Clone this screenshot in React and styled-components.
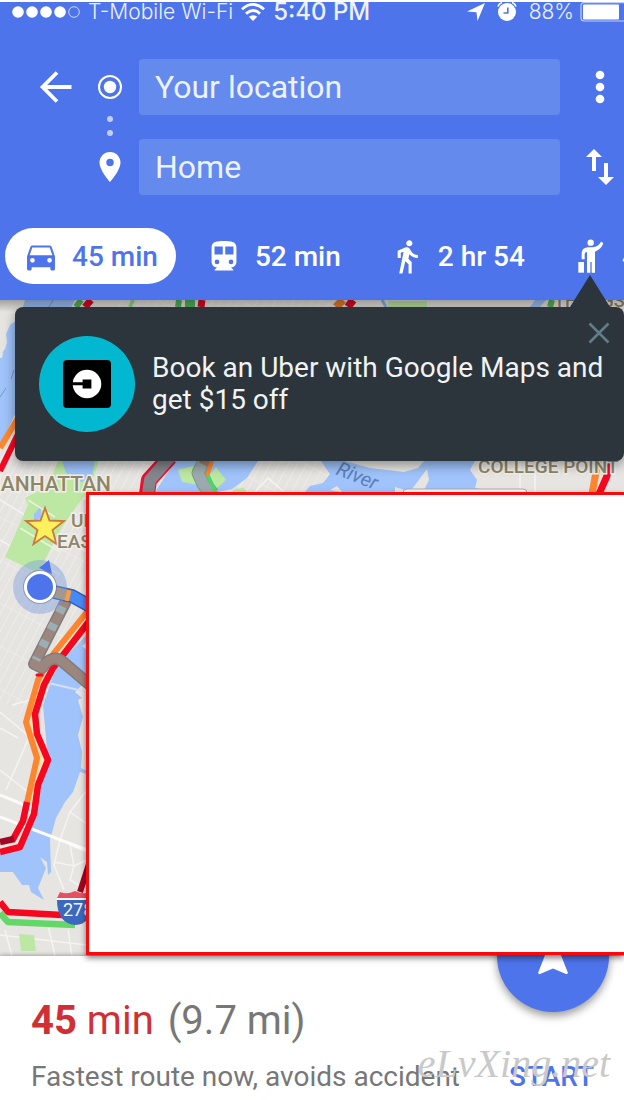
import React from "react";
import styled, { createGlobalStyle } from "styled-components";

const blue = "#4e74ec";
const slate = "#2b353b";

const GlobalStyle = createGlobalStyle`
  *, *::before, *::after { box-sizing: border-box; }
  body {
    margin: 0;
    background: #fff;
    font-family: Roboto, "Liberation Sans", sans-serif;
    overflow-x: hidden;
  }
  button, input { font: inherit; color: inherit; border: 0; margin: 0; padding: 0; background: none; }
  svg { display: block; flex: none; overflow: visible; }
`;

const Page = styled.div`
  min-height: 100vh;
  display: flex;
  flex-direction: column;
  overflow: hidden;
  border-top: 2px solid #fff;
`;

const Header = styled.header`
  background: ${blue};
  color: #fff;
  padding-bottom: 16px;
`;

const StatusBar = styled.div`
  display: flex;
  align-items: center;
  justify-content: space-between;
  height: 20px;
  padding-left: 11px;
  font-family: Inter, Roboto, sans-serif;
  line-height: 20px;
  white-space: nowrap;
`;

const StatusGroup = styled.div`
  display: flex;
  align-items: center;
  gap: ${(p) => p.$gap}px;
`;

const StatusText = styled.span`
  font-size: ${(p) => (p.$strong ? 24 : 21)}px;
  font-weight: ${(p) => (p.$strong ? 500 : 300)};
  opacity: 0.9;
`;

const RouteForm = styled.form`
  display: grid;
  grid-template-columns: 48px 59px minmax(0, 1fr) 64px;
  grid-template-rows: 56px 24px 56px;
  align-items: center;
  justify-items: center;
  padding: 37px 0 33px 32px;
`;

const PlaceField = styled.input`
  grid-column: 3;
  width: 100%;
  height: 56px;
  padding: 0 16px;
  border-radius: 4px;
  background: #648aee;
  font-size: 32px;
  color: #edf2ff;
  outline: none;
`;

const IconButton = styled.button`
  display: grid;
  place-items: center;
  width: 48px;
  height: 48px;
  cursor: pointer;
`;

const BackButton = styled(IconButton)`
  grid-column: 1;
`;

const ActionButton = styled(IconButton)`
  grid-column: 4;
  justify-self: end;
`;

const RouteMark = styled.span`
  grid-column: 2;
`;

const Modes = styled.nav`
  display: flex;
  gap: 12px;
  padding-left: 5px;
  overflow: hidden;
`;

const ModeButton = styled.button`
  display: flex;
  flex: none;
  align-items: center;
  gap: 15px;
  height: 56px;
  padding: 0 18px 0 20px;
  border-radius: 28px;
  background: ${(p) => (p.$active ? "#fff" : "transparent")};
  color: ${(p) => (p.$active ? blue : "#fff")};
  font-size: 28px;
  font-weight: 500;
  white-space: nowrap;
  cursor: pointer;
`;

const MapArea = styled.main`
  position: relative;
  flex: 1;
  min-height: 480px;
  background: #e7e5e1;
`;

const MapCanvas = styled.svg`
  position: absolute;
  inset: 0;
  width: 100%;
  height: 100%;
  overflow: hidden;
`;

const Callout = styled.aside`
  position: absolute;
  z-index: 3;
  top: 7px;
  left: 15px;
  right: 0;
  display: flex;
  align-items: center;
  gap: 17px;
  min-height: 154px;
  padding: 24px 16px 24px 24px;
  border-radius: 8px;
  background: ${slate};
  box-shadow: 0 4px 12px rgba(0, 0, 0, 0.4);
  color: #f1f3f3;
  font-size: 28px;
  line-height: 32px;

  &::before {
    content: "";
    position: absolute;
    right: 14px;
    bottom: 100%;
    border: solid transparent;
    border-width: 0 20px 32px;
    border-bottom-color: ${slate};
  }
`;

const CalloutText = styled.p`
  margin: 0;
`;

const CloseButton = styled.button`
  position: absolute;
  top: 14px;
  right: 13px;
  padding: 2px;
  cursor: pointer;
`;

const BlankPanel = styled.section`
  position: absolute;
  z-index: 4;
  top: 192px;
  left: 86px;
  right: 0;
  bottom: 1px;
  border: 3px solid #f9090b;
  border-right: 0;
  background: #fff;
  box-shadow: 0 3px 6px rgba(0, 0, 0, 0.5);
`;

const Sheet = styled.footer`
  position: relative;
  z-index: 1;
  padding: 41px 30px 7px 31px;
  background: #fff;
  box-shadow: 0 -1px 4px rgba(0, 0, 0, 0.3);
  color: #777;
`;

const Summary = styled.h1`
  margin: 0 0 16px;
  font-size: 40px;
  line-height: 48px;
  font-weight: 400;
`;

const Duration = styled.span`
  margin-right: 4px;
  color: #d03034;
`;

const SheetRow = styled.div`
  display: flex;
  justify-content: space-between;
  align-items: center;
  font-size: 28px;
  line-height: 32px;
  white-space: nowrap;
`;

const StartButton = styled.button`
  color: ${blue};
  font-weight: 500;
  cursor: pointer;
`;

const NavigateButton = styled.button`
  position: absolute;
  top: -56px;
  right: 15px;
  display: grid;
  place-items: center;
  width: 112px;
  height: 112px;
  border-radius: 50%;
  background: ${blue};
  box-shadow: 0 4px 8px rgba(0, 0, 0, 0.4);
`;

const Watermark = styled.span`
  position: absolute;
  right: 14px;
  bottom: 12px;
  color: #c9c9c9;
  font-family: "Liberation Serif", serif;
  font-size: 40px;
  font-style: italic;
  line-height: 48px;
  pointer-events: none;
`;

const SignalIcon = () => (
  <svg width="69" height="14" viewBox="0 0 69 14" fill="#fff">
    {[7, 21, 35, 49].map((x) => <circle key={x} cx={x} cy="7" r="5.8" />)}
    <circle cx="63" cy="7" r="5.3" fill="none" stroke="#fff" strokeOpacity=".7" />
  </svg>
);

const WifiIcon = () => (
  <svg width="24" height="18" viewBox="0 0 24 18" fill="none" stroke="#fff" strokeWidth="2.8">
    <path d="M1 6.2Q12-3.4 23 6.2M5 10.6Q12 4.4 19 10.6" />
    <path d="M12 18L7.8 13.8Q12 10.6 16.2 13.8Z" fill="#fff" stroke="none" />
  </svg>
);

const LocationArrowIcon = () => (
  <svg width="18" height="18" viewBox="0 0 18 18" fill="#fff">
    <path d="M18 0L10.5 18L9.5 9.2L0 8.4Z" />
  </svg>
);

const AlarmIcon = () => (
  <svg width="20" height="18" viewBox="0 0 20 18" fill="none" stroke="#fff">
    <circle cx="10" cy="9" r="9" fill="#fff" stroke="none" />
    <path d="M1 3.5Q2 .5 5-.4M19 3.5Q18 .5 15-.4" strokeWidth="1.6" />
    <path d="M10.8 4.5V10H6.5" stroke={blue} strokeWidth="1.6" />
  </svg>
);

const BatteryIcon = () => (
  <svg width="44" height="20" viewBox="0 0 44 20">
    <path d="M44 .7H4Q1 .7 1 3.7V16Q1 19 4 19H44" fill="none" stroke="#fff" strokeOpacity=".65" strokeWidth="1.2" />
    <rect x="3" y="2.4" width="36" height="15" rx="1" fill="#fff" />
  </svg>
);

const BackIcon = () => (
  <svg width="32" height="32" viewBox="0 0 32 32" fill="none" stroke="#fff" strokeWidth="3.8">
    <path d="M31.5 16H3M17 1.5L2.6 16L17 30.5" />
  </svg>
);

const OriginIcon = () => (
  <svg width="24" height="24" viewBox="0 0 24 24">
    <circle cx="12" cy="12" r="11" fill="none" stroke="#fff" strokeWidth="2" />
    <circle cx="12" cy="12" r="6.2" fill="#fff" />
  </svg>
);

const DotsIcon = () => (
  <svg width="8" height="22" viewBox="0 0 8 22" fill="#fff" opacity=".65">
    <circle cx="4" cy="3" r="3" /><circle cx="4" cy="17" r="3" />
  </svg>
);

const PinIcon = () => (
  <svg width="22" height="30" viewBox="5 2 14 20" fill="#fff">
    <path d="M12 2C8.13 2 5 5.13 5 9c0 5.25 7 13 7 13s7-7.75 7-13c0-3.87-3.13-7-7-7zm0 9.5a2.5 2.5 0 1 1 0-5 2.5 2.5 0 0 1 0 5z" />
  </svg>
);

const MoreIcon = () => (
  <svg width="10" height="34" viewBox="0 0 10 34" fill="#fff">
    <circle cx="5" cy="5" r="4.3" /><circle cx="5" cy="17" r="4.3" /><circle cx="5" cy="29" r="4.3" />
  </svg>
);

const SwapIcon = () => (
  <svg width="28" height="36" viewBox="0 0 28 36" fill="#fff">
    <path d="M8 0L16 8H10V22H6V8H0ZM20 36L12 28H18V14H22V28H28Z" />
  </svg>
);

const ModeGlyph = ({ children }) => (
  <svg width="32" height="32" viewBox="1.7 1.4 20.6 20.6" fill="currentColor">{children}</svg>
);

const CarIcon = () => (
  <ModeGlyph>
    <path fillRule="evenodd" d="M18.92 6.01C18.72 5.42 18.16 5 17.5 5h-11c-.66 0-1.21.42-1.42 1.01L3 12v8c0 .55.45 1 1 1h1c.55 0 1-.45 1-1v-1h12v1c0 .55.45 1 1 1h1c.55 0 1-.45 1-1v-8l-2.08-5.99zM6.5 16a1.5 1.5 0 1 1 0-3 1.5 1.5 0 0 1 0 3zm11 0a1.5 1.5 0 1 1 0-3 1.5 1.5 0 0 1 0 3zM4.7 11.2L6.4 6.3h11.2l1.7 4.9H4.7z" />
  </ModeGlyph>
);

const TrainIcon = () => (
  <ModeGlyph>
    <path fillRule="evenodd" d="M12 2c-4.42 0-8 .5-8 4v9.5C4 17.43 5.57 19 7.5 19L6 20.5v.5h12v-.5L16.5 19c1.93 0 3.5-1.57 3.5-3.5V6c0-3.5-3.58-4-8-4zM7.5 17a1.5 1.5 0 1 1 0-3 1.5 1.5 0 0 1 0 3zm3.7-6.2H5.9V5.6h5.3v5.2zm5.3 6.2a1.5 1.5 0 1 1 0-3 1.5 1.5 0 0 1 0 3zm1.6-6.2h-5.3V5.6h5.3v5.2z" />
  </ModeGlyph>
);

const WalkIcon = () => (
  <ModeGlyph>
    <path d="M13.5 5.5c1.1 0 2-.9 2-2s-.9-2-2-2-2 .9-2 2 .9 2 2 2zM9.8 8.9L7 23h2.1l1.8-8 2.1 2v6h2v-7.5l-2.1-2 .6-3C14.8 12 16.8 13 19 13v-2c-1.9 0-3.5-1-4.3-2.4l-1-1.6c-.4-.6-1-1-1.7-1-.3 0-.5.1-.8.1L6 8.3V13h2V9.6l1.8-.7" />
  </ModeGlyph>
);

const HailIcon = () => (
  <svg width="32" height="32" viewBox="7 0 96 96" fill="currentColor">
    <circle cx="54" cy="8" r="9.5" />
    <path d="M27 58V40Q27 24 45 22H60Q77 20 85 5L92 9Q87 27 67 35V98H57V66H53V98H43V36Q36 36 36 43V58Z" />
    <path d="M17 66H34V98H17Z" />
  </svg>
);

const UberIcon = () => (
  <svg width="96" height="96" viewBox="0 0 96 96">
    <circle cx="48" cy="48" r="48" fill="#02b8d1" />
    <rect x="24" y="24" width="48" height="48" rx="4" />
    <circle cx="48" cy="48" r="14.3" fill="#fff" />
    <path d="M33 46.3H43.6V43.6H52.4V52.4H43.6V49.2H33Z" />
  </svg>
);

const CloseIcon = () => (
  <svg width="20" height="20" viewBox="0 0 20 20" stroke="#607d89" strokeWidth="2.6">
    <path d="M.5.5L19.5 19.5M19.5.5L.5 19.5" />
  </svg>
);

const NavigateIcon = () => (
  <svg width="38" height="38" viewBox="0 0 38 38" fill="#fff">
    <path d="M19-2L34 36L32.6 37.2L19 31.4L5.4 37.2L4 36Z" />
  </svg>
);

function MapDrawing() {
  return (
    <MapCanvas viewBox="0 300 624 656" preserveAspectRatio="xMinYMin slice" aria-label="Route map">
      <defs>
        <pattern id="blocks" width="8" height="38" patternUnits="userSpaceOnUse" patternTransform="rotate(28)">
          <rect width="8" height="38" fill="#e6e4e0" />
          <path d="M0 0V38M0 0H8" stroke="#efeeec" strokeWidth="1.6" />
        </pattern>
        <linearGradient id="headerShade" x1="0" y1="0" x2="0" y2="1">
          <stop offset="0" stopColor="#000" stopOpacity=".3" />
          <stop offset="1" stopColor="#000" stopOpacity="0" />
        </linearGradient>
      </defs>
      <rect y="300" width="624" height="656" fill="#e7e5e1" />
      <path d="M0 448L20 400L120 300H330V492H87V612L40 680L28 720L0 700Z" fill="url(#blocks)" />

      <g fill="none" stroke="#f5f4f2" strokeWidth="1.5">
        <path d="M0 712L36 742M12 705L30 700M30 735L6 790M0 770L28 792M0 728L18 738M0 500L87 552M0 540L60 575M60 485L87 500" />
        <path d="M87 790L70 812L60 840L54 865L64 890M70 812L87 824M54 862L74 866L87 860M74 866L70 880L87 890M74 866L70 845L87 852" />
        <path d="M0 935L87 945M5 930L12 956M48 925L55 956M68 930L72 956M35 480L50 500" />
        <path d="M255 492L268 478L284 492M520 461V492M535 470V492" />
      </g>

      <g fill="#9fc3fa">
        <path d="M25 300H75L16 412L0 446V356L5 349L7 342L6 334L10 325L20 318Z" />
        <path d="M87 634L56 668L43 705L48 760L34 816L20 848L0 852V872H13L22 885H29L31 892L44 900L38 888L46 868L40 857L47 862L48 875L51 872L50 840L56 818L65 802L73 792L80 772L87 774V771L81 768L82 752L78 735L83 717L78 700L82 698L75 692L87 680V650L82 646L87 642Z" />
        <path d="M175 461H258L247 478L232 489L218 492H155Z" />
        <path d="M321 461H475L470 470L477 480L475 488L495 492H305L310 486L323 483L330 474Z" />
        <path d="M535 300H546L540 307H530Z" />
      </g>
      <path d="M0 352L3 353L2 358H0Z" fill="#e7e5e1" />
      <path d="M345 461H424L418 468L404 472L370 468ZM412 489L427 469L429 480L424 490ZM330 490L337 486L342 492ZM395 487L405 490V492H395Z" fill="#e7e5e1" />
      <path d="M53 300L49 307M14 370L11 379M6 388L0 397" stroke="#7899ca" strokeWidth="1" />

      <g fill="#bde8a3">
        <path d="M58 461H99L88 492H87L62 527L38 573L5 557L28 505L25 498L48 486Z" />
        <path d="M178 470L193 466L199 485L182 482ZM208 477L216 467L226 480L216 489ZM235 489L243 488L247 492H232Z" />
        <path d="M19 934L34 935L36 951H21Z" />
        <path d="M388 301H427V307H388Z" />
      </g>
      <path d="M34 514L41 506L41 518L34 521ZM62 461H95L92 476L82 482L66 473Z" fill="#9fc3fa" />
      <path d="M20 528L60 552M28 500L55 517" stroke="#e6f5da" strokeWidth="1.5" />

      <g fill="none" stroke="#fbfbfa" strokeWidth="3">
        <path d="M0 795L34 809M0 817L87 850" />
        <path d="M40 681L87 692" stroke="#d3e1f3" strokeWidth="2" />
      </g>

      <g fill="none" strokeWidth="6">
        <path d="M18 418L0 448" stroke="#ff882f" />
        <path d="M20 430L0 471" stroke="#f30722" />
        <path d="M81 300L76 307" stroke="#52b557" />
        <path d="M91 300L85 307M202 300L201 307" stroke="#dc0922" strokeWidth="7" />
        <path d="M133 300L130 307" stroke="#9ad68d" strokeWidth="4" />
        <path d="M179 300L178 307M552 300L550 307" stroke="#52b557" />
        <path d="M190 300V307" stroke="#52b557" strokeWidth="10" />
        <path d="M343 300L336 307" stroke="#e97b2b" strokeWidth="8" />
        <path d="M353 300L348 307" stroke="#dc0922" strokeWidth="8" />
        <path d="M382 300L386 307" stroke="#8eb1e5" strokeWidth="3" />
      </g>

      <g fill="none" strokeLinejoin="round">
        <path d="M90 616L58 660L42 688L32 722L42 758L32 803" stroke="#fae2b8" strokeWidth="7" />
        <path d="M90 608L54 653L38 680L26 722L37 758L27 803" stroke="#fd8530" strokeWidth="6" />
        <path d="M90 620L53 668L44 685L35 714L37 734L48 760L38 785L34 814L20 847L0 852" stroke="#f50720" strokeWidth="6.5" />
        <path d="M27 802L23 821L12 841" stroke="#f50720" strokeWidth="6.5" />
        <path d="M14 839L0 842" stroke="#a00722" strokeWidth="6.5" />
        <path d="M89 864L80 892" stroke="#a00722" strokeWidth="6" />
        <path d="M0 902L8 912L62 915" stroke="#f50720" strokeWidth="6.5" />
        <path d="M0 913L8 922L75 925" stroke="#64d768" strokeWidth="6.5" />
      </g>

      <g fill="none" strokeLinejoin="round">
        <path d="M170 457L149 480L147 494" stroke="#e91135" strokeWidth="16" />
        <path d="M170 457L150 480L148 494" stroke="#84868c" strokeWidth="12" />
        <path d="M207 458L199 473L204 484L212 494" stroke="#72a474" strokeWidth="15" />
        <path d="M205 458L198 473L203 484L210 494" stroke="#9da9b0" strokeWidth="11" />
        <path d="M204 465L208 457" stroke="#a77e69" strokeWidth="11" />
        <path d="M212 461L207 476" stroke="#fd8530" strokeWidth="4" />
        <path d="M208 476L216 493" stroke="#4fd26b" strokeWidth="4" />
        <path d="M598 461L592 494" stroke="#fd8530" strokeWidth="7" />
        <path d="M612 461Q607 478 599 494" stroke="#f50720" strokeWidth="7" />
      </g>

      <g fill="none" strokeLinejoin="round" strokeLinecap="round">
        <path d="M65 603L34 664L42 668Q52 653 63 662L90 685" stroke="#807d7b" strokeWidth="12" />
        <path d="M65 603L34 664L42 668Q52 653 63 662L90 685" stroke="#9c877f" strokeWidth="9" />
        <path d="M65 601L36 660" stroke="#9caeb4" strokeWidth="9" strokeLinecap="butt" strokeDasharray="7 12" strokeDashoffset="-6" />
        <path d="M37 675H42" stroke="#f50720" strokeWidth="3" />
      </g>
      <g fill="none" strokeLinejoin="round">
        <path d="M54 592L72 596L90 606" stroke="#355db2" strokeWidth="14" />
        <path d="M54 592L72 596L90 606" stroke="#488af5" strokeWidth="11" />
        <path d="M54 592L70 596" stroke="#c5975e" strokeWidth="11" />
        <path d="M66 595L70 596" stroke="#fb9f3e" strokeWidth="11" />
      </g>
      <circle cx="40" cy="587" r="27" fill="#7599de" fillOpacity=".42" />
      <path d="M39 568L49 560L52 574Z" fill="#4e74ec" />
      <circle cx="40" cy="587" r="17" fill="#596371" opacity=".45" />
      <circle cx="40" cy="587" r="14.5" fill="#4e74ec" stroke="#fff" strokeWidth="3" />
      <path d="M45 508L49.5 520.5L64 521L52.5 530L56.5 544L45 536L33.5 544L37.5 530L26 521L40.5 520.5Z" fill="#fcf15d" stroke="#cc783e" strokeWidth="1.8" />

      <g>
        <path d="M57 900H93Q92 925 75 925Q57 923 57 900Z" fill="#3c68bd" />
        <path d="M60 892Q67 895 75 891Q83 895 91 892V898H57Z" fill="#e84f62" />
        <path d="M57 899H90" stroke="#fff" strokeWidth="1.5" />
        <text x="63" y="916" fill="#f5f7fd" fontFamily="Roboto, sans-serif" fontSize="18">278</text>
      </g>

      <g fontFamily="Roboto, sans-serif" fontWeight="500" fill="#8f8568" stroke="#f1efeb" strokeWidth="3" paintOrder="stroke">
        <text x="111" y="491" fontSize="21" textAnchor="end">MANHATTAN</text>
        <text x="71" y="527" fontSize="19">UPPER</text>
        <text x="57" y="548" fontSize="19">EAST SIDE</text>
        <text x="478" y="473" fontSize="19">COLLEGE POINT</text>
        <text x="554" y="307" fontSize="18">THROGS</text>
      </g>
      <text transform="translate(335 474) rotate(22)" fontFamily="Roboto, sans-serif" fontSize="20" fontStyle="italic" fill="#5c7fbd">River</text>
      <rect x="403" y="489" width="124" height="30" rx="4" fill="#f8f8f7" stroke="#aaa" />
      <rect y="300" width="624" height="12" fill="url(#headerShade)" />
    </MapCanvas>
  );
}

const modes = [
  { label: "45 min", name: "Drive", Icon: CarIcon, active: true },
  { label: "52 min", name: "Transit", Icon: TrainIcon },
  { label: "2 hr 54", name: "Walk", Icon: WalkIcon },
  { label: "4 min", name: "Ride", Icon: HailIcon },
];

export default function App() {
  return (
    <>
      <GlobalStyle />
      <Page>
        <Header>
          <StatusBar>
            <StatusGroup $gap={8}>
              <SignalIcon />
              <StatusText>T-Mobile Wi-Fi</StatusText>
              <WifiIcon />
              <StatusText $strong>5:40 PM</StatusText>
            </StatusGroup>
            <StatusGroup $gap={12}>
              <LocationArrowIcon />
              <AlarmIcon />
              <StatusGroup $gap={6}>
                <StatusText>88%</StatusText>
                <BatteryIcon />
              </StatusGroup>
            </StatusGroup>
          </StatusBar>
          <RouteForm onSubmit={(e) => e.preventDefault()}>
            <BackButton type="button" aria-label="Back"><BackIcon /></BackButton>
            <RouteMark><OriginIcon /></RouteMark>
            <PlaceField aria-label="Starting point" defaultValue="Your location" />
            <ActionButton type="button" aria-label="More options"><MoreIcon /></ActionButton>
            <RouteMark><DotsIcon /></RouteMark>
            <RouteMark><PinIcon /></RouteMark>
            <PlaceField aria-label="Destination" defaultValue="Home" />
            <ActionButton type="button" aria-label="Swap places"><SwapIcon /></ActionButton>
          </RouteForm>
          <Modes aria-label="Travel modes">
            {modes.map(({ label, name, Icon, active }) => (
              <ModeButton key={name} type="button" title={name} $active={active}>
                <Icon />
                {label}
              </ModeButton>
            ))}
          </Modes>
        </Header>
        <MapArea>
          <MapDrawing />
          <Callout>
            <UberIcon />
            <CalloutText>Book an Uber with Google Maps and get $15 off</CalloutText>
            <CloseButton type="button" aria-label="Dismiss"><CloseIcon /></CloseButton>
          </Callout>
          <BlankPanel />
        </MapArea>
        <Sheet>
          <Summary>
            <Duration><b>45</b> min</Duration> (9.7 mi)
          </Summary>
          <SheetRow>
            <span>Fastest route now, avoids accident</span>
            <StartButton type="button">START</StartButton>
          </SheetRow>
          <NavigateButton type="button" aria-label="Navigate"><NavigateIcon /></NavigateButton>
          <Watermark>eLvXing.net</Watermark>
        </Sheet>
      </Page>
    </>
  );
}
